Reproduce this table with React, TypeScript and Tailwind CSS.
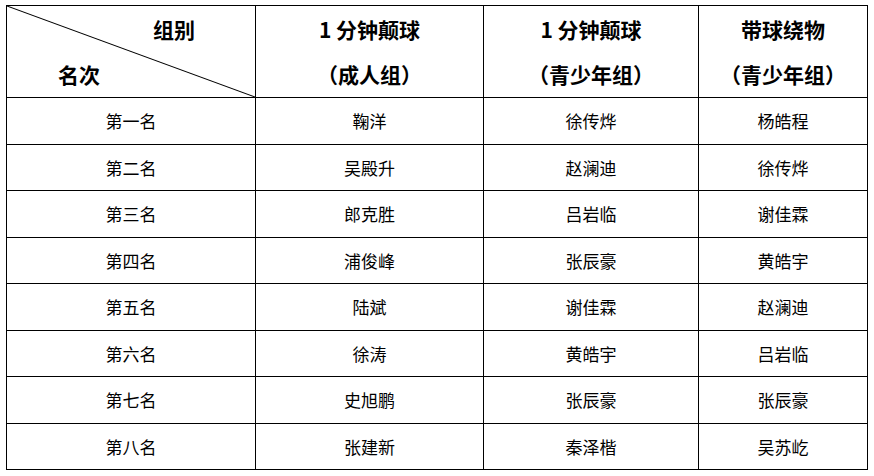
const rows = [
  ["第一名", "鞠洋", "徐传烨", "杨皓程"],
  ["第二名", "吴殿升", "赵澜迪", "徐传烨"],
  ["第三名", "郎克胜", "吕岩临", "谢佳霖"],
  ["第四名", "浦俊峰", "张辰豪", "黄皓宇"],
  ["第五名", "陆斌", "谢佳霖", "赵澜迪"],
  ["第六名", "徐涛", "黄皓宇", "吕岩临"],
  ["第七名", "史旭鹏", "张辰豪", "张辰豪"],
  ["第八名", "张建新", "秦泽楷", "吴苏屹"],
]

const headers = [
  ["1 分钟颠球", "（成人组）"],
  ["1 分钟颠球", "（青少年组）"],
  ["带球绕物", "（青少年组）"],
]

export default function App() {
  return (
    <div
      className="min-h-[476px] w-[874px] bg-white pl-[6px] pt-[5px] text-black"
      style={{ fontFamily: '"Noto Sans CJK SC", "Noto Sans", sans-serif' }}
    >
      <table className="table-fixed border-collapse">
        <colgroup>
          <col className="w-[249px]" />
          <col className="w-[228px]" />
          <col className="w-[215px]" />
          <col className="w-[169px]" />
        </colgroup>
        <thead>
          <tr className="h-[92px]">
            <th className="relative border border-black p-0 text-left text-[21px] font-bold leading-[45px]">
              <svg className="absolute inset-0 h-full w-full" preserveAspectRatio="none" viewBox="0 0 100 100">
                <line x1="0" y1="0" x2="100" y2="100" stroke="black" strokeWidth="1" vectorEffect="non-scaling-stroke" />
              </svg>
              <div className="pl-[146px]">组别</div>
              <div className="pl-[51px]">名次</div>
            </th>
            {headers.map((h, i) => (
              <th key={i} className="border border-black p-0 text-center text-[21px] font-bold leading-[45px]">
                <div>{h[0]}</div>
                <div>{h[1]}</div>
              </th>
            ))}
          </tr>
        </thead>
        <tbody>
          {rows.map((r, i) => (
            <tr key={i} className="h-[46.5px]">
              {r.map((c, j) => (
                <td key={j} className="border border-black p-0 text-center text-[17px] leading-none">
                  {c}
                </td>
              ))}
            </tr>
          ))}
        </tbody>
      </table>
    </div>
  )
}
